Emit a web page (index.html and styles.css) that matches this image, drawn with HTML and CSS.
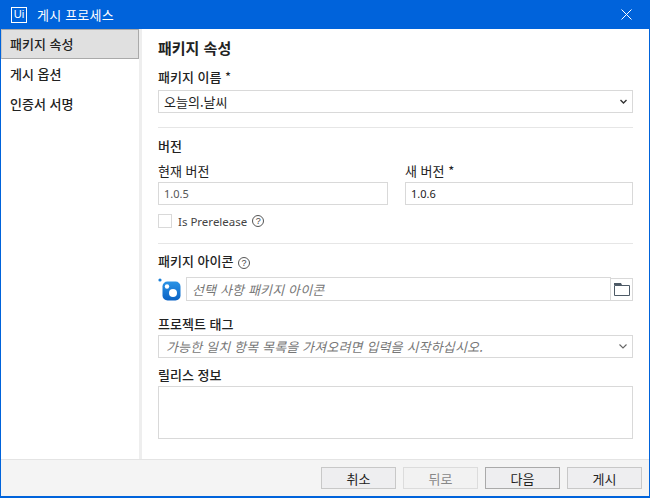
FILE: index.html
```html
<!DOCTYPE html>
<html lang="ko">
<head>
<meta charset="utf-8">
<title>게시 프로세스</title>
<link rel="stylesheet" href="styles.css">
</head>
<body>
<div class="window">
  <header class="titlebar">
    <span class="logo">Ui</span>
    <span class="title">게시 프로세스</span>
    <svg class="close" width="11" height="11" viewBox="0 0 11 11"><path d="M0.5 0.5L10.5 10.5M10.5 0.5L0.5 10.5" stroke="#fff" stroke-width="1" fill="none"/></svg>
  </header>
  <div class="body">
    <nav class="sidebar">
      <div class="nav-item active">패키지 속성</div>
      <div class="nav-item">게시 옵션</div>
      <div class="nav-item">인증서 서명</div>
    </nav>
    <main class="content">
      <h1 class="heading">패키지 속성</h1>
      <div class="label strong name-label">패키지 이름 <span class="req">*</span></div>
      <div class="field select">
        <span class="value">오늘의.날씨</span>
        <svg class="chev" width="7" height="5" viewBox="0 0 7 5"><path d="M0.5 1L3.5 4L6.5 1" stroke="#333" stroke-width="1.4" fill="none"/></svg>
      </div>
      <hr class="rule first-rule">
      <div class="label strong version-title">버전</div>
      <div class="columns">
        <div class="col col-current">
          <div class="label">현재 버전</div>
          <div class="field"><span class="value version muted">1.0.5</span></div>
        </div>
        <div class="col col-new">
          <div class="label">새 버전 <span class="req">*</span></div>
          <div class="field"><span class="value version">1.0.6</span></div>
        </div>
      </div>
      <div class="check-row">
        <span class="checkbox"></span>
        <span class="check-label">Is Prerelease</span>
        <span class="help">?</span>
      </div>
      <hr class="rule second-rule">
      <div class="label strong icon-label">패키지 아이콘 <span class="help">?</span></div>
      <div class="icon-row">
        <svg class="pkg" width="23" height="23" viewBox="0 0 23 23">
          <defs><linearGradient id="pkgfill" x1="0" y1="0" x2="0" y2="1"><stop offset="0" stop-color="#2a93e6"/><stop offset="1" stop-color="#0a62c4"/></linearGradient></defs>
          <circle cx="2" cy="2" r="1.6" fill="#1a7fd8"/>
          <rect x="4.5" y="3.5" width="18" height="19" rx="5" fill="url(#pkgfill)"/>
          <circle cx="9" cy="8.5" r="2.2" fill="#fff"/>
          <circle cx="15" cy="15" r="4" fill="#fff"/>
        </svg>
        <div class="field icon-field"><span class="value hint">선택 사항 패키지 아이콘</span></div>
        <div class="browse">
          <svg width="16" height="13" viewBox="0 0 16 13"><path d="M0.5 12.5V2.5H15.5V12.5Z" fill="none" stroke="#4d5a66"/><path d="M0 0H7L8 2H0Z" fill="#4d5a66"/></svg>
        </div>
      </div>
      <div class="label strong tag-label">프로젝트 태그</div>
      <div class="field select tag-field">
        <span class="value hint">가능한 일치 항목 목록을 가져오려면 입력을 시작하십시오.</span>
        <svg class="chev" width="8" height="5" viewBox="0 0 8 5"><path d="M0.5 0.5L4 4L7.5 0.5" stroke="#666" stroke-width="1.1" fill="none"/></svg>
      </div>
      <div class="label strong notes-label">릴리스 정보</div>
      <div class="field notes"></div>
    </main>
  </div>
  <footer class="footer">
    <button class="btn">취소</button>
    <button class="btn disabled">뒤로</button>
    <button class="btn primary">다음</button>
    <button class="btn">게시</button>
  </footer>
</div>
</body>
</html>
```
FILE: styles.css
```css
* { box-sizing: border-box; }
html, body { margin: 0; height: 100%; }
body {
  width: 650px;
  height: 498px;
  overflow: hidden;
  font-family: "Noto Sans CJK KR", "Noto Sans", sans-serif;
  font-size: 13px;
  color: #222;
  background: #fff;
}
.window {
  width: 650px;
  height: 498px;
  display: flex;
  flex-direction: column;
  border: 1px solid #0063db;
  border-top: 0;
  border-bottom-width: 2px;
}
.titlebar {
  height: 29px;
  margin: 0 -1px;
  background: #0063db;
  color: #fff;
  display: flex;
  align-items: center;
  padding: 0 18px 0 11px;
  flex: none;
}
.logo {
  width: 16px;
  height: 16px;
  border: 1.5px solid #fff;
  font: 400 11px/13px "Liberation Sans", sans-serif;
  text-align: center;
  margin-right: 10px;
}
.title { flex: 1; font-size: 13px; letter-spacing: 0.2px; }
.body { flex: 1; display: flex; min-height: 0; }
.sidebar {
  width: 138px;
  flex: none;
  background: #fff;
}
.nav-item {
  height: 30px;
  padding-left: 9px;
  line-height: 29px;
  font-weight: 500;
  font-size: 13px;
}
.active {
  background: #e0e0e0;
  border: 1px solid #aaa;
  border-left-color: #c8c8c8;
  padding-left: 8px;
  line-height: 27px;
}
.content {
  flex: 1;
  border-left: 3px solid #eeeeee;
  padding: 9px 16px 0 16px;
}
.heading {
  margin: 0;
  font-size: 15px;
  font-weight: 700;
  line-height: 20px;
}
.label { font-size: 13px; line-height: 18px; height: 18px; }
.strong { font-weight: 500; }
.req { font-weight: 400; }
.name-label { margin-top: 10px; margin-bottom: 4px; }
.field {
  height: 23px;
  border: 1px solid #d9d9d9;
  background: #fff;
  display: flex;
  align-items: center;
  padding: 0 5px;
  font-size: 13px;
}
.value { flex: 1; white-space: nowrap; overflow: hidden; }
.version { font-family: "Noto Sans", sans-serif; font-size: 11px; }
.muted { color: #555; }
.hint { color: #777; font-style: italic; letter-spacing: 0.14px; }
.chev { flex: none; margin-right: 0; }
.rule { border: 0; border-top: 1px solid #e6e6e6; margin: 0; }
.first-rule { margin-top: 14px; }
.version-title { margin-top: 9px; }
.columns { display: flex; gap: 17px; margin-top: 7px; }
.col { display: flex; flex-direction: column; gap: 2px; }
.col-current { flex: none; width: 230px; }
.col-new { flex: 1; }
.check-row { display: flex; align-items: center; margin-top: 9px; height: 14px; }
.checkbox { width: 14px; height: 14px; border: 1px solid #d9d9d9; margin-right: 6px; }
.check-label { font-family: "Noto Sans", sans-serif; font-size: 11.5px; color: #444; margin-right: 5px; }
.help {
  display: inline-block;
  width: 12px;
  height: 12px;
  border: 1px solid #555;
  border-radius: 50%;
  font: 9px/10px "Liberation Sans", sans-serif;
  text-align: center;
  color: #444;
  margin-left: 1px;
}
.check-row .help { margin-left: 0; }
.second-rule { margin-top: 15px; }
.icon-label { margin-top: 8px; }
.icon-row { display: flex; align-items: flex-start; margin-top: 7px; }
.pkg { flex: none; margin-right: 5px; margin-top: 1px; }
.icon-field { flex: 1; height: 24px; padding-left: 5px; }
.browse {
  width: 22px;
  height: 23px;
  margin-top: 1px;
  border: 1px solid #d9d9d9;
  border-left: 0;
  display: flex;
  align-items: center;
  justify-content: center;
  flex: none;
}
.tag-label { margin-top: 14px; margin-bottom: 2px; }
.tag-field { padding-left: 7px; }
.notes-label { margin-top: 8px; margin-bottom: 2px; }
.notes { height: 53px; }
.footer {
  height: 37px;
  flex: none;
  background: #f4f4f4;
  border-top: 1px solid #e4e4e4;
  display: flex;
  align-items: flex-start;
  justify-content: flex-end;
  gap: 7px;
  padding: 7px 7px 0 0;
}
.btn {
  width: 75px;
  height: 22px;
  padding: 0;
  border: 1px solid #c8c8c8;
  background: #eeeef0;
  color: #222;
  font: 13px "Noto Sans CJK KR", sans-serif;
}
.disabled { border-color: #dcdcdc; background: #f2f2f2; color: #888; }
.primary { border-color: #aaa; }
```
